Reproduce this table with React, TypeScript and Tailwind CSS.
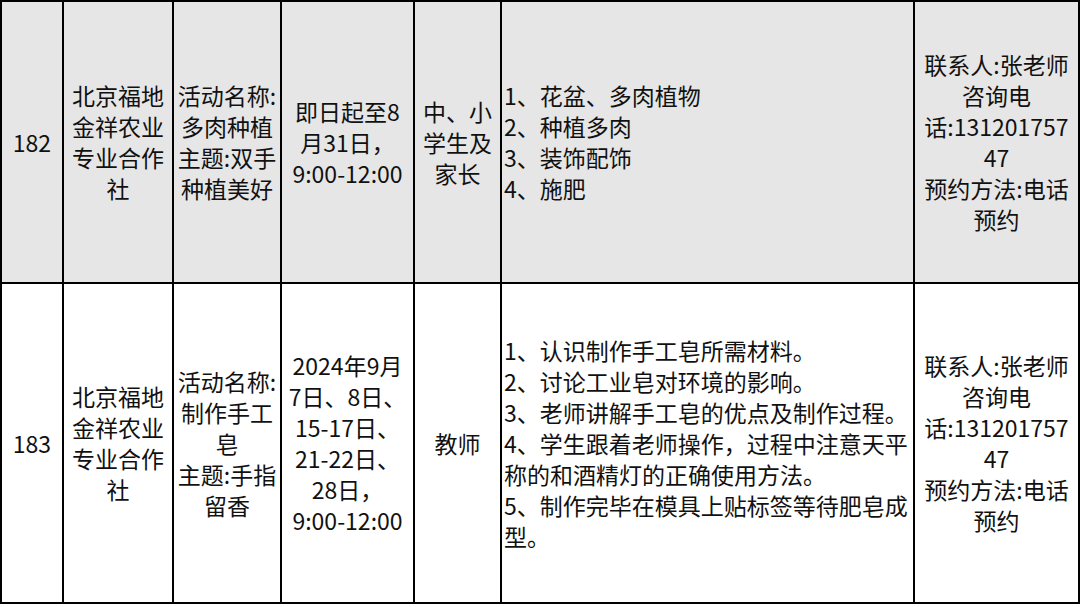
const rows = [
  {
    no: "182",
    org: ["北京福地", "金祥农业", "专业合作", "社"],
    name: ["活动名称:", "多肉种植", "主题:双手", "种植美好"],
    time: ["即日起至8", "月31日，", "9:00-12:00"],
    who: ["中、小", "学生及", "家长"],
    content: ["1、花盆、多肉植物", "2、种植多肉", "3、装饰配饰", "4、施肥"],
    gray: true,
    h: "h-[282px]",
  },
  {
    no: "183",
    org: ["北京福地", "金祥农业", "专业合作", "社"],
    name: ["活动名称:", "制作手工", "皂", "主题:手指", "留香"],
    time: ["2024年9月", "7日、8日、", "15-17日、", "21-22日、", "28日，", "9:00-12:00"],
    who: ["教师"],
    content: [
      "1、认识制作手工皂所需材料。",
      "2、讨论工业皂对环境的影响。",
      "3、老师讲解手工皂的优点及制作过程。",
      "4、学生跟着老师操作，过程中注意天平",
      "称的和酒精灯的正确使用方法。",
      "5、制作完毕在模具上贴标签等待肥皂成",
      "型。",
    ],
    gray: false,
    h: "h-[320px]",
  },
];

const contact = ["联系人:张老师", "咨询电", "话:131201757", "47", "预约方法:电话", "预约"];

function Lines({ items }: { items: string[] }) {
  return (
    <>
      {items.map((t, i) => (
        <div key={i} className="whitespace-nowrap">
          {t}
        </div>
      ))}
    </>
  );
}

export default function App() {
  return (
    <div
      className="w-[1080px] h-[607px] bg-white text-[#111] text-[23px] leading-[31px] overflow-hidden"
      style={{ fontFamily: '"Noto Sans CJK SC", "Noto Sans", sans-serif' }}
    >
      <table className="table-fixed border-collapse w-[1078px]">
        <colgroup>
          <col className="w-[62px]" />
          <col className="w-[110px]" />
          <col className="w-[108px]" />
          <col className="w-[133px]" />
          <col className="w-[87px]" />
          <col className="w-[413px]" />
          <col className="w-[165px]" />
        </colgroup>
        <tbody>
          {rows.map((r) => (
            <tr key={r.no} className={`${r.h} ${r.gray ? "bg-[#e6e6e6]" : "bg-white"}`}>
              <td className="border-2 border-black text-center align-middle p-0">{r.no}</td>
              <td className="border-2 border-black text-center align-middle p-0">
                <Lines items={r.org} />
              </td>
              <td className="border-2 border-black text-center align-middle p-0">
                <Lines items={r.name} />
              </td>
              <td className="border-2 border-black text-center align-middle p-0">
                <Lines items={r.time} />
              </td>
              <td className="border-2 border-black text-center align-middle p-0">
                <Lines items={r.who} />
              </td>
              <td className="border-2 border-black text-left align-middle p-0 pl-[2px]">
                <Lines items={r.content} />
              </td>
              <td className="border-2 border-black text-center align-middle p-0">
                <Lines items={contact} />
              </td>
            </tr>
          ))}
        </tbody>
      </table>
    </div>
  );
}
